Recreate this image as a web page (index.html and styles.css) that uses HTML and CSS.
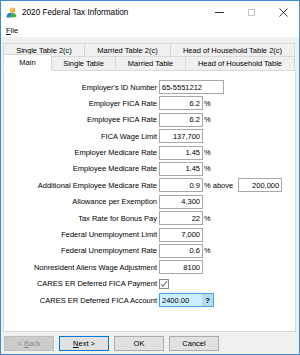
FILE: index.html
```html
<!DOCTYPE html>
<html lang="en">
<head>
  <meta charset="UTF-8" />
  <title>2020 Federal Tax Information</title>
  <link rel="stylesheet" href="styles.css">
</head>
<body>

<div class="window">
  <div class="titlebar">
    <svg class="app-icon" width="11" height="11" viewBox="0 0 11 11">
      <circle cx="6.5" cy="3" r="2.6" fill="#f6a21c"/>
      <circle cx="6" cy="2.5" r="1.2" fill="#fde27a"/>
      <path d="M0.5 10.5 C0.5 7 2.5 5.8 5 5.8 C5.6 7.5 5.4 9.3 4.6 10.5 Z" fill="#2a7bd3"/>
      <path d="M4.6 10.5 C5.4 9.3 5.6 7.5 5 5.8 C8 5.8 10.5 7 10.5 9.5 C9 10.4 7 10.6 4.6 10.5 Z" fill="#3fae3a"/>
    </svg>
    <span class="title">2020 Federal Tax Information</span>
    <div class="controls">
      <span class="ctl"><span class="min-line"></span></span>
      <span class="ctl"><span class="max-box"></span></span>
      <span class="ctl">
        <svg width="9" height="9" viewBox="0 0 9 9"><path d="M0.5 0.5 L8.5 8.5 M8.5 0.5 L0.5 8.5" stroke="#222" stroke-width="0.9"/></svg>
      </span>
    </div>
  </div>

  <div class="menubar"><span><u>F</u>ile</span></div>

  <div class="dialog">
    <div class="tab-row back-row">
      <span class="tab w81">Single Table 2(c)</span>
      <span class="tab w86">Married Table 2(c)</span>
      <span class="tab w124">Head of Household Table 2(c)</span>
    </div>
    <div class="tab-row front-row">
      <span class="tab active w48">Main</span>
      <span class="tab w64">Single Table</span>
      <span class="tab w70">Married Table</span>
      <span class="tab w109">Head of Household Table</span>
    </div>

    <div class="panel">
      <div class="form">
        <label>Employer's ID Number</label>
        <div class="field"><span class="box wide left">65-5551212</span></div>

        <label>Employer FICA Rate</label>
        <div class="field"><span class="box">6.2</span><span>%</span></div>

        <label>Employee FICA Rate</label>
        <div class="field"><span class="box">6.2</span><span>%</span></div>

        <label>FICA Wage Limit</label>
        <div class="field"><span class="box">137,700</span></div>

        <label>Employer Medicare Rate</label>
        <div class="field"><span class="box">1.45</span><span>%</span></div>

        <label>Employee Medicare Rate</label>
        <div class="field"><span class="box">1.45</span><span>%</span></div>

        <label>Additional Employee Medicare Rate</label>
        <div class="field"><span class="box">0.9</span><span>% above</span><span class="box gap-left">200,000</span></div>

        <label>Allowance per Exemption</label>
        <div class="field"><span class="box">4,300</span></div>

        <label>Tax Rate for Bonus Pay</label>
        <div class="field"><span class="box">22</span><span>%</span></div>

        <label>Federal Unemployment Limit</label>
        <div class="field"><span class="box">7,000</span></div>

        <label>Federal Unemployment Rate</label>
        <div class="field"><span class="box">0.6</span><span>%</span></div>

        <label>Nonresident Aliens Wage Adjustment</label>
        <div class="field"><span class="box">8100</span></div>

        <label>CARES ER Deferred FICA Payment</label>
        <div class="field">
          <span class="check">
            <svg width="8" height="8" viewBox="0 0 8 8"><path d="M1 4.2 L3 6.3 L7 1.2" fill="none" stroke="#333" stroke-width="0.9"/></svg>
          </span>
        </div>

        <label>CARES ER Deferred FICA Account</label>
        <div class="field">
          <span class="box focus left">2400.00<span class="help">?</span></span>
        </div>
      </div>
    </div>

    <div class="buttons">
      <span class="btn disabled"><span>&lt; <u>B</u>ack</span></span>
      <span class="btn default"><span><u>N</u>ext &gt;</span></span>
      <span class="btn"><span>OK</span></span>
      <span class="btn"><span>Cancel</span></span>
    </div>
  </div>
</div>

</body>
</html>
```

FILE: styles.css
```css
* {
  box-sizing: border-box;
  margin: 0;
  padding: 0;
}

body {
  font-family: 'Liberation Sans', Arial, sans-serif;
  font-size: 7.5px;
  color: #000;
  background: #fff;
}

.window {
  width: 300px;
  height: 355px;
  border: 1px solid #3d8bd9;
  background: #f0f0f0;
  display: flex;
  flex-direction: column;
}

/* Title bar */
.titlebar {
  height: 22px;
  background: #fff;
  display: flex;
  align-items: center;
  padding-left: 5px;
}

.app-icon {
  margin-right: 5px;
  flex: none;
}

.title {
  font-size: 8.2px;
}

.controls {
  margin-left: auto;
  display: flex;
  height: 100%;
}

.ctl {
  width: 32px;
  display: flex;
  align-items: center;
  justify-content: center;
}

.min-line {
  width: 9px;
  height: 1px;
  background: #333;
}

.max-box {
  width: 7px;
  height: 7px;
  border: 1px solid #c8c8c8;
}

/* Menu */
.menubar {
  height: 14px;
  background: #fff;
  display: flex;
  align-items: center;
  padding-left: 5px;
}

/* Dialog body */
.dialog {
  flex: 1;
  padding: 6px 0 0 2px;
}

.tab-row {
  display: flex;
  position: relative;
  z-index: 1;
}

.back-row {
  height: 14px;
}

.front-row {
  height: 15px;
  margin-top: -1px;
  margin-bottom: -1px;
  align-items: flex-end;
}

.tab {
  height: 100%;
  border: 1px solid #d9d9d9;
  margin-right: -1px;
  background: #f0f0f0;
  display: flex;
  align-items: center;
  justify-content: center;
  white-space: nowrap;
}

.front-row .tab {
  height: 15px;
}

.front-row .tab.active {
  height: 17px;
  background: #fff;
  border-bottom-color: #fff;
  position: relative;
  z-index: 2;
  padding-bottom: 1px;
}

.w48 { width: 49px; }
.w64 { width: 65px; }
.w70 { width: 71px; }
.w109 { width: 110px; }
.w81 { width: 82px; }
.w86 { width: 87px; }
.w124 { width: 125px; }

.panel {
  width: 293px;
  height: 262px;
  background: #fff;
  border: 1px solid #d9d9d9;
  padding-top: 9px;
}

.form {
  display: grid;
  grid-template-columns: 153px auto;
  grid-auto-rows: 14px;
  column-gap: 2px;
  row-gap: 2.4px;
}

.form label {
  text-align: right;
  align-self: center;
  white-space: nowrap;
}

.field {
  display: flex;
  align-items: center;
  gap: 1px;
  white-space: nowrap;
}

.box {
  width: 44px;
  height: 14px;
  border: 1px solid #a8a8a8;
  display: flex;
  align-items: center;
  justify-content: flex-end;
  padding: 0 2px;
  background: #fff;
}

.box.left {
  justify-content: flex-start;
}

.box.wide {
  width: 65px;
}

.box.gap-left {
  margin-left: 4px;
}

.box.focus {
  width: 55px;
  background: #cdf0ff;
  border-color: #4aa3e8;
  padding-right: 0;
  position: relative;
}

.help {
  margin-left: auto;
  width: 11px;
  height: 12px;
  background: #b5dcf4;
  font-weight: bold;
  display: flex;
  align-items: center;
  justify-content: center;
}

.check {
  width: 10px;
  height: 10px;
  border: 1px solid #8a8a8a;
  background: #fff;
  display: flex;
  align-items: center;
  justify-content: center;
}

/* Bottom buttons */
.buttons {
  display: flex;
  gap: 5px;
  margin-top: 4px;
  margin-left: 1px;
}

.btn {
  width: 50px;
  height: 15px;
  border: 1px solid #adadad;
  background: #e1e1e1;
  display: flex;
  align-items: center;
  justify-content: center;
  white-space: pre;
}

.btn.default {
  border-color: #0078d7;
}

.btn.disabled {
  background: #cccccc;
  border-color: #bfbfbf;
  color: #8d8d8d;
}
```
